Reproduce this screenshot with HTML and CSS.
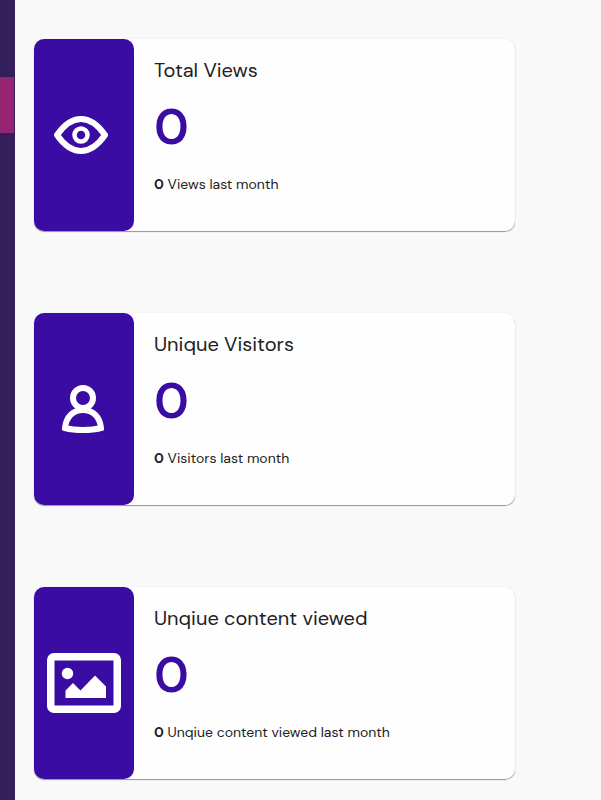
FILE: index.html
```html
<!DOCTYPE html>
<html lang="en">
<head>
    <meta charset="UTF-8">
    <meta name="viewport" content="width=device-width, initial-scale=1.0">
    <title>Dashboard</title>
    <link rel="stylesheet" href="styles.css">
</head>
<body>
    <div class="layout">
        <aside class="sidebar">
            <div class="sidebar-active"></div>
        </aside>

        <main class="stats">
            <section class="card">
                <div class="card-icon">
                    <svg class="icon-eye" width="54" height="38" viewBox="0 0 54 38" fill="none" stroke="#fff" aria-hidden="true">
                        <path d="M3 19C10 9 18 3 27 3s17 6 24 16c-7 10-15 16-24 16S10 29 3 19z" stroke-width="6" stroke-linejoin="round"/>
                        <circle cx="27" cy="19" r="6.500" stroke-width="4.500"/>
                    </svg>
                </div>
                <div class="card-body">
                    <h2>Total Views</h2>
                    <p class="total">0</p>
                    <p class="recent"><b>0</b> Views last month</p>
                </div>
            </section>

            <section class="card">
                <div class="card-icon">
                    <svg class="icon-user" width="42" height="48" viewBox="0 0 42 48" fill="none" stroke="#fff" stroke-width="6" aria-hidden="true">
                        <circle cx="21" cy="13" r="10"/>
                        <path d="M3 43C4 32 11 25 21 25s17 7 18 18c-10 2.600-26 2.600-36 0z"/>
                    </svg>
                </div>
                <div class="card-body">
                    <h2>Unique Visitors</h2>
                    <p class="total">0</p>
                    <p class="recent"><b>0</b> Visitors last month</p>
                </div>
            </section>

            <section class="card">
                <div class="card-icon">
                    <svg width="74" height="60" viewBox="0 0 74 60" fill="#fff" aria-hidden="true">
                        <path fill-rule="evenodd" d="M7 0h60a7 7 0 0 1 7 7v46a7 7 0 0 1-7 7H7a7 7 0 0 1-7-7V7a7 7 0 0 1 7-7zM7.500 7.500v45h59v-45z"/>
                        <circle cx="20.500" cy="20.500" r="5.700"/>
                        <path d="M18.500 45v-7.500l7.500-7.500 7.500 7.500L48 22.500l11 11V45z"/>
                    </svg>
                </div>
                <div class="card-body">
                    <h2>Unqiue content viewed</h2>
                    <p class="total">0</p>
                    <p class="recent"><b>0</b> Unqiue content viewed last month</p>
                </div>
            </section>
        </main>
    </div>
</body>
</html>
```
FILE: styles.css
```css
* {
    box-sizing: border-box;
}

body {
    margin: 0;
    font-family: "DM Sans", Inter, sans-serif;
    color: #212121;
    background-color: #f9f9f9;
}

.layout {
    display: flex;
    min-height: 100vh;
}

.sidebar {
    flex: 0 0 15px;
    padding: 77px 1px 0 0;
    background-color: #321f5b;
}

.sidebar-active {
    height: 56px;
    background-color: #952572;
}

.stats {
    flex: 1;
    display: flex;
    flex-direction: column;
    gap: 82px;
    padding: 39px 86px 21px 19px;
}

.card {
    display: flex;
    min-height: 192px;
    background-color: #fefefe;
    border-radius: 10px;
    box-shadow: 0 1px 1px rgba(0, 0, 0, 0.4), 0 0 1px rgba(0, 0, 0, 0.15);
}

.card-icon {
    flex: 0 0 100px;
    display: flex;
    align-items: center;
    justify-content: center;
    background-color: #3a0ca3;
    border-radius: 10px;
}

.icon-eye {
    margin-right: 6px;
}

.icon-user {
    margin-right: 2px;
}

.card-body {
    padding: 18px 20px;
}

.card-body h2 {
    margin: 0;
    font-size: 20px;
    font-weight: 400;
    line-height: 26px;
}

.total {
    margin: 12px 0;
    font-size: 50px;
    font-weight: 600;
    line-height: 64px;
    color: #3a0ca3;
}

.recent {
    margin: 0;
    font-size: 14px;
    line-height: 26px;
}
```
